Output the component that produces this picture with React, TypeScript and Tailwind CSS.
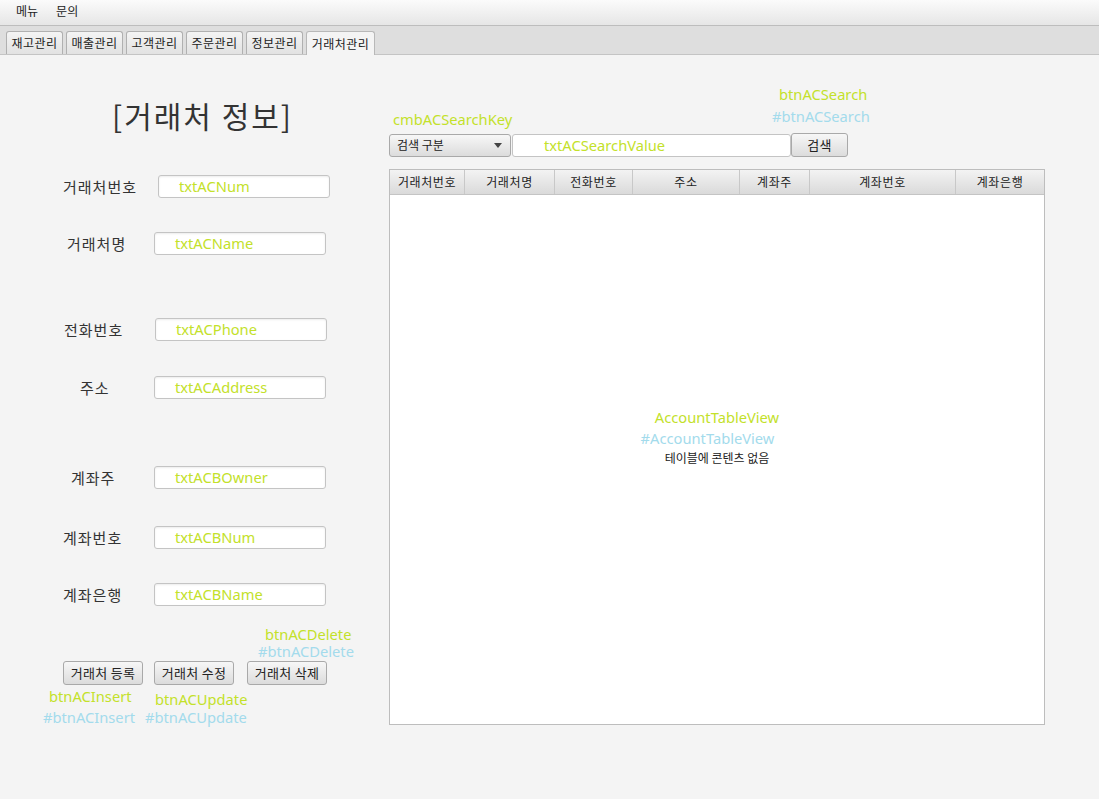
import React from "react";

const KR = "font-['Noto_Sans_CJK_KR','Noto_Sans',sans-serif]";
const LAT = "font-['Noto_Sans','Open_Sans',sans-serif]";

const TABS = ["재고관리", "매출관리", "고객관리", "주문관리", "정보관리", "거래처관리"];

const FIELDS = [
  { label: "거래처번호", id: "txtACNum", row: "mt-[42px]", lbl: "ml-[63px] w-[95px]" },
  { label: "거래처명", id: "txtACName", row: "mt-[34px]", lbl: "ml-[67px] w-[87px]" },
  { label: "전화번호", id: "txtACPhone", row: "mt-[63px]", lbl: "ml-[64px] w-[91px]" },
  { label: "주소", id: "txtACAddress", row: "mt-[35px]", lbl: "ml-[80px] w-[74px]" },
  { label: "계좌주", id: "txtACBOwner", row: "mt-[67px]", lbl: "ml-[71px] w-[83px]" },
  { label: "계좌번호", id: "txtACBNum", row: "mt-[37px]", lbl: "ml-[63px] w-[91px]" },
  { label: "계좌은행", id: "txtACBName", row: "mt-[34px]", lbl: "ml-[63px] w-[91px]" },
];

const COLS = [
  { name: "거래처번호", w: "w-[75px]" },
  { name: "거래처명", w: "w-[90px]" },
  { name: "전화번호", w: "w-[78px]" },
  { name: "주소", w: "w-[107px]" },
  { name: "계좌주", w: "w-[70px]" },
  { name: "계좌번호", w: "w-[146px]" },
  { name: "계좌은행", w: "flex-1" },
];

function Id({ text, alt }: { text: string; alt?: boolean }) {
  return (
    <div className={`${LAT} text-[14.7px] leading-[17px] whitespace-nowrap ${alt ? "text-[#a3dbec]" : "text-[#c3e12a]"}`}>
      {text}
    </div>
  );
}

function Field({ id }: { id: string }) {
  return (
    <div className="w-[172px] h-[23px] rounded-[3px] border border-[#c4c4c4] bg-white shadow-[inset_0_1px_2px_rgba(0,0,0,0.08)] flex items-center pl-[20px]">
      <Id text={id} />
    </div>
  );
}

function Btn({ label, w = "w-[80px]" }: { label: string; w?: string }) {
  return (
    <button className={`${w} h-[24px] rounded-[3px] border border-[#a9a9a9] bg-gradient-to-b from-[#f7f7f7] to-[#dcdcdc] text-[13px] leading-[16px] tracking-[0.3px] text-[#222] ${KR} flex items-center justify-center`}>
      {label}
    </button>
  );
}

export default function App() {
  return (
    <div className={`w-[1099px] h-[799px] bg-[#f4f4f4] overflow-hidden ${KR} text-[#222]`}>
      <div className="h-[26px] bg-gradient-to-b from-[#fbfbfb] to-[#e6e6e6] border-b border-[#bdbdbd] flex items-center gap-[18px] pl-[16px] text-[12px] pb-[3px]">
        <span>메뉴</span>
        <span>문의</span>
      </div>

      <div className="h-[29px] bg-[#dedede] border-b border-[#c4c4c4] flex items-end gap-[3px] pl-[6px]">
        {TABS.map((t, i) => (
          <div
            key={t}
            className={`flex items-center justify-center text-[12px] tracking-[0.5px] border border-b-0 rounded-t-[3px] ${
              i === TABS.length - 1
                ? "w-[69px] bg-[#f4f4f4] border-[#b8b8b8] h-[24px] -mb-px"
                : "w-[57px] h-[23px] bg-gradient-to-b from-[#f4f4f4] to-[#e2e2e2] border-[#b0b0b0]"
            }`}
          >
            {t}
          </div>
        ))}
      </div>

      <div className="flex">
        <div className="w-[389px] flex flex-col">
          <div className="mt-[42px] ml-[112px] h-[36px] text-[30px] leading-[36px] tracking-[2px] text-[#333] whitespace-nowrap">
            [거래처 정보]
          </div>

          {FIELDS.map((f) => (
            <div key={f.id} className={`${f.row} flex items-center h-[23px]`}>
              <span className={`${f.lbl} text-[15px] leading-[18px] tracking-[1px] text-[#333] whitespace-nowrap`}>{f.label}</span>
              <Field id={f.id} />
            </div>
          ))}

          <div className="mt-[20px] flex flex-col">
            <div className="ml-[265px]"><Id text="btnACDelete" /></div>
            <div className="ml-[258px]"><Id text="#btnACDelete" alt /></div>
          </div>

          <div className="mt-[1px] flex gap-[11px] ml-[63px]">
            <Btn label="거래처 등록" />
            <Btn label="거래처 수정" />
            <div className="ml-[2px]"><Btn label="거래처 삭제" /></div>
          </div>

          <div className="flex">
            <div className="ml-[43px] w-[102px] flex flex-col mt-[3px]">
              <div className="ml-[6px]"><Id text="btnACInsert" /></div>
              <div className="mt-[4px]"><Id text="#btnACInsert" alt /></div>
            </div>
            <div className="flex flex-col mt-[6px]">
              <div className="ml-[10px]"><Id text="btnACUpdate" /></div>
              <div className="mt-[1px]"><Id text="#btnACUpdate" alt /></div>
            </div>
          </div>
        </div>

        <div className="flex flex-col">
          <div className="mt-[31px] flex items-end">
            <div className="w-[383px] pl-[4px] mb-[-3px]"><Id text="cmbACSearchKey" /></div>
            <div className="flex flex-col gap-[5px]">
              <div className="ml-[7px]"><Id text="btnACSearch" /></div>
              <Id text="#btnACSearch" alt />
            </div>
          </div>

          <div className="mt-[8px] flex items-center">
            <div className="w-[122px] h-[23px] rounded-[3px] border border-[#a9a9a9] bg-gradient-to-b from-[#f7f7f7] to-[#dcdcdc] flex items-center pl-[7px] pr-[8px] text-[12px] leading-[16px]">
              <span className="flex-1">검색 구분</span>
              <svg width="8" height="5" viewBox="0 0 8 5"><path d="M0 0h8L4 5z" fill="#444" /></svg>
            </div>
            <div className="ml-[1px] w-[279px] h-[23px] rounded-[3px] border border-[#c4c4c4] bg-white flex items-center pl-[31px]">
              <Id text="txtACSearchValue" />
            </div>
            <Btn label="검색" w="w-[57px]" />
          </div>

          <div className="mt-[12px] w-[656px] h-[556px] border border-[#bdbdbd] bg-white flex flex-col">
            <div className="h-[25px] flex bg-gradient-to-b from-[#f3f3f3] to-[#dadada] border-b border-[#c4c4c4]">
              {COLS.map((c) => (
                <div key={c.name} className={`${c.w} h-full flex items-center justify-center text-[12px] tracking-[0.6px] border-r border-[#c8c8c8] last:border-r-0`}>
                  {c.name}
                </div>
              ))}
            </div>
            <div className="flex-1 flex flex-col items-center pt-[214px]">
              <Id text="AccountTableView" />
              <div className="ml-[-19px] mt-[4px]"><Id text="#AccountTableView" alt /></div>
              <div className="mt-[3px] text-[12px] leading-[16px] text-[#222]">테이블에 콘텐츠 없음</div>
            </div>
          </div>
        </div>
      </div>
    </div>
  );
}
